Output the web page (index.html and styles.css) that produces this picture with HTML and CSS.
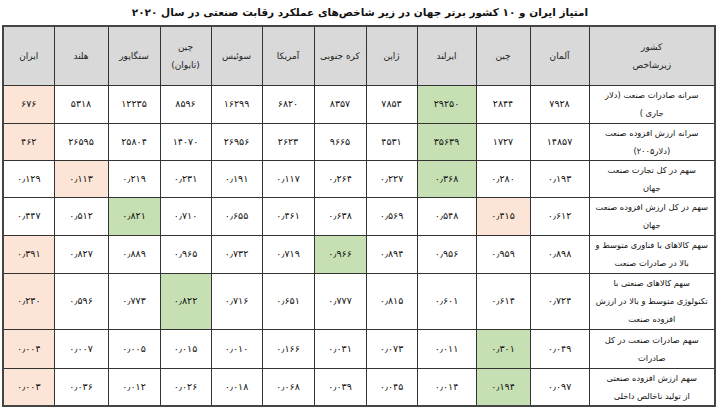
FILE: index.html
```html
<!DOCTYPE html>
<html lang="fa" dir="rtl">
<head>
<meta charset="utf-8">
<title>امتیاز ایران</title>
<link rel="stylesheet" href="styles.css">
</head>
<body>
<h1 class="title">امتیاز ایران و ۱۰ کشور برتر جهان در زیر شاخص‌های عملکرد رقابت صنعتی در سال ۲۰۲۰</h1>
<table class="grid">
<colgroup>
<col class="c-label"><col class="c-w59"><col class="c-w54"><col class="c-w59"><col class="c-w51"><col class="c-w52"><col class="c-w52"><col class="c-w51"><col class="c-w51"><col class="c-w52"><col class="c-w54"><col class="c-w51">
</colgroup>
<tr class="r-head">
<th>کشور<br>زیرشاخص</th><th>آلمان</th><th>چین</th><th>ایرلند</th><th>ژاپن</th><th>کره جنوبی</th><th>آمریکا</th><th>سوئیس</th><th>چین<br>(تایوان)</th><th>سنگاپور</th><th>هلند</th><th>ایران</th>
</tr>
<tr class="r-38">
<td class="label">سرانه صادرات صنعت (دلار<br>جاری )</td><td>۷۹۲۸</td><td>۲۸۴۴</td><td class="g">۲۹۲۵۰</td><td>۷۸۵۳</td><td>۸۳۵۷</td><td>۶۸۲۰</td><td>۱۶۲۹۹</td><td>۸۵۹۶</td><td>۱۲۲۳۵</td><td>۵۳۱۸</td><td class="p">۶۷۶</td>
</tr>
<tr class="r-37">
<td class="label">سرانه ارزش افزوده صنعت<br>(دلار۲۰۰۵)</td><td>۱۴۸۵۷</td><td>۱۷۲۷</td><td class="g">۳۵۶۳۹</td><td>۴۵۳۱</td><td>۹۶۶۵</td><td>۲۶۲۳</td><td>۲۶۹۵۶</td><td>۱۴۰۷۰</td><td>۲۵۸۰۴</td><td>۲۶۵۹۵</td><td class="p">۴۶۲</td>
</tr>
<tr class="r-37">
<td class="label">سهم در کل تجارت صنعت<br>جهان</td><td>۰٫۱۹۳</td><td>۰٫۲۸۰</td><td class="g">۰٫۳۶۸</td><td>۰٫۲۲۷</td><td>۰٫۲۶۴</td><td>۰٫۱۱۷</td><td>۰٫۱۹۱</td><td>۰٫۲۳۱</td><td>۰٫۲۱۹</td><td class="p">۰٫۱۱۳</td><td>۰٫۱۲۹</td>
</tr>
<tr class="r-38">
<td class="label">سهم در کل ارزش افزوده صنعت<br>جهان</td><td>۰٫۶۱۲</td><td class="p">۰٫۴۱۵</td><td>۰٫۵۴۸</td><td>۰٫۵۶۹</td><td>۰٫۶۳۸</td><td>۰٫۴۶۱</td><td>۰٫۶۵۵</td><td>۰٫۷۱۰</td><td class="g">۰٫۸۲۱</td><td>۰٫۵۱۲</td><td>۰٫۴۴۷</td>
</tr>
<tr class="r-38">
<td class="label">سهم کالاهای با فناوری متوسط و<br>بالا در صادرات صنعت</td><td>۰٫۸۹۸</td><td>۰٫۹۵۹</td><td>۰٫۹۵۶</td><td>۰٫۸۹۴</td><td class="g">۰٫۹۶۶</td><td>۰٫۷۱۹</td><td>۰٫۷۳۲</td><td>۰٫۹۶۵</td><td>۰٫۸۸۹</td><td>۰٫۸۲۷</td><td class="p">۰٫۳۹۱</td>
</tr>
<tr class="r-56">
<td class="label">سهم کالاهای صنعتی با<br>تکنولوژی متوسط و بالا در ارزش<br>افزوده صنعت</td><td>۰٫۷۲۴</td><td>۰٫۶۱۴</td><td>۰٫۶۰۱</td><td>۰٫۸۱۵</td><td>۰٫۷۷۷</td><td>۰٫۶۵۱</td><td>۰٫۷۱۶</td><td class="g">۰٫۸۲۲</td><td>۰٫۷۷۳</td><td>۰٫۵۹۶</td><td class="p">۰٫۲۳۰</td>
</tr>
<tr class="r-39">
<td class="label">سهم صادرات صنعت  در کل<br>صادرات</td><td>۰٫۰۴۹</td><td class="g">۰٫۳۰۱</td><td>۰٫۰۱۱</td><td>۰٫۰۷۳</td><td>۰٫۰۳۱</td><td>۰٫۱۶۶</td><td>۰٫۰۱۰</td><td>۰٫۰۱۵</td><td>۰٫۰۰۵</td><td>۰٫۰۰۷</td><td class="p">۰٫۰۰۴</td>
</tr>
<tr class="r-37">
<td class="label">سهم  ارزش افزوده صنعتی<br>از تولید ناخالص داخلی</td><td>۰٫۰۹۷</td><td class="g">۰٫۱۹۴</td><td>۰٫۰۱۴</td><td>۰٫۰۴۵</td><td>۰٫۰۳۹</td><td>۰٫۰۶۸</td><td>۰٫۰۱۸</td><td>۰٫۰۲۶</td><td>۰٫۰۱۲</td><td>۰٫۰۳۶</td><td class="p">۰٫۰۰۳</td>
</tr>
</table>
</body>
</html>
```
FILE: styles.css
```css
html, body {
  margin: 0;
  padding: 0;
  background: #ffffff;
}
body {
  font-family: "DejaVu Sans", sans-serif;
  color: #1a1a1a;
  width: 720px;
}
.title {
  margin: 0;
  height: 25px;
  line-height: 24px;
  font-size: 10.5px;
  font-weight: bold;
  text-align: center;
  color: #111;
}
.grid {
  border-collapse: collapse;
  table-layout: fixed;
  width: 712px;
  margin-right: 4px;
  border: 2px solid #444;
}
.c-label { width: 126px; }
.c-w59 { width: 59px; }
.c-w54 { width: 54px; }
.c-w52 { width: 52px; }
.c-w51 { width: 51px; }
.grid th,
.grid td {
  border: 1px solid #333;
  padding: 0;
  text-align: center;
  vertical-align: middle;
  overflow: hidden;
}
.grid th {
  background: #d9d9d9;
  font-weight: normal;
  font-size: 9px;
  line-height: 18px;
  color: #222;
}
.grid td {
  font-size: 9.5px;
  line-height: 12px;
  color: #111;
}
.grid td.label {
  font-size: 8.3px;
  line-height: 18px;
  padding: 0;
  white-space: nowrap;
}
.r-head { height: 59px; }
.r-37 { height: 37px; }
.r-38 { height: 38px; }
.r-39 { height: 39px; }
.r-56 { height: 56px; }
.g { background: #c6e0b4; }
.p { background: #fce4d6; }
```
